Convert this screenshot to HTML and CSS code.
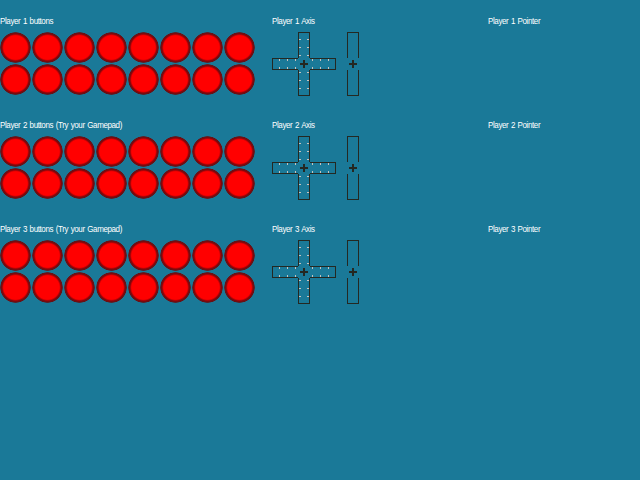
FILE: index.html
```
<!DOCTYPE html>
<html lang="en">
<head>
<meta charset="utf-8">
<title>Input test</title>
<link rel="stylesheet" href="styles.css">
</head>
<body>
<svg class="defs" aria-hidden="true">
  <defs>
    <symbol id="stick" viewBox="0 0 64 64">
      <path class="line" d="M26.5 26V.5H37.5V26M38 26.5H63.5V37.5H38M37.5 38V63.5H26.5V38M26 37.5H.5V26.5H26"/>
      <path class="tick" d="M27 7.5h2M27 15.5h2M27 23.5h2M35 7.5h2M35 15.5h2M35 23.5h2M27 40.5h2M27 48.5h2M27 56.5h2M35 40.5h2M35 48.5h2M35 56.5h2M7.5 27v2M15.5 27v2M23.5 27v2M40.5 27v2M48.5 27v2M56.5 27v2M7.5 35v2M15.5 35v2M23.5 35v2M40.5 35v2M48.5 35v2M56.5 35v2"/>
      <path class="cross" d="M28 32h8M32 28v8"/>
    </symbol>
    <symbol id="throttle" viewBox="0 0 12 64">
      <path class="line" d="M.5 26V.5H11.5V26M.5 38V63.5H11.5V38"/>
      <path class="cross" d="M2 32h8M6 28v8"/>
    </symbol>
  </defs>
</svg>
<main class="players"></main>
<script src="script.js"></script>
</body>
</html>
```
FILE: styles.css
```
body {
  margin: 0;
  background: #1a7998;
  color: #fff;
  font: 9px/11px "Liberation Sans", Arial, sans-serif;
}

.defs {
  display: none;
}

.players {
  display: grid;
  gap: 8px;
  padding-top: 16px;
}

.player {
  display: grid;
  grid-template-columns: 272px 216px 1fr;
  height: 96px;
}

.label {
  height: 16px;
  margin: 0;
  font: inherit;
  letter-spacing: -0.45px;
  word-spacing: 0.9px;
  white-space: nowrap;
  transform: scaleX(0.89);
  transform-origin: 0 0;
}

.buttons {
  display: grid;
  grid-template-columns: repeat(8, 32px);
  grid-auto-rows: 32px;
}

.button {
  width: 31px;
  height: 31px;
  border-radius: 50%;
  background: radial-gradient(circle closest-side, #f00 11.8px, #c80003 12.7px, #80080c 13.5px, #651217 14.9px, transparent 15.6px);
}

.axes {
  display: flex;
  gap: 11px;
}

.stick {
  width: 64px;
  height: 64px;
}

.throttle {
  width: 12px;
  height: 64px;
}

.line,
.tick,
.cross {
  fill: none;
  stroke: #242822;
  shape-rendering: crispEdges;
}

.tick {
  stroke: #c8c4c0;
}

.cross {
  stroke-width: 2px;
}
```
FILE: script.js
```
const players = document.querySelector(".players");
for (let n = 1; n <= 3; n++) {
  const hint = n > 1 ? " (Try your Gamepad)" : "";
  players.insertAdjacentHTML("beforeend", `
    <section class="player">
      <div>
        <h2 class="label">Player ${n} buttons${hint}</h2>
        <div class="buttons">${'<span class="button"></span>'.repeat(16)}</div>
      </div>
      <div>
        <h2 class="label">Player ${n} Axis</h2>
        <div class="axes">
          <svg class="stick"><use href="#stick"/></svg>
          <svg class="throttle"><use href="#throttle"/></svg>
        </div>
      </div>
      <div>
        <h2 class="label">Player ${n} Pointer</h2>
      </div>
    </section>`);
}
```
